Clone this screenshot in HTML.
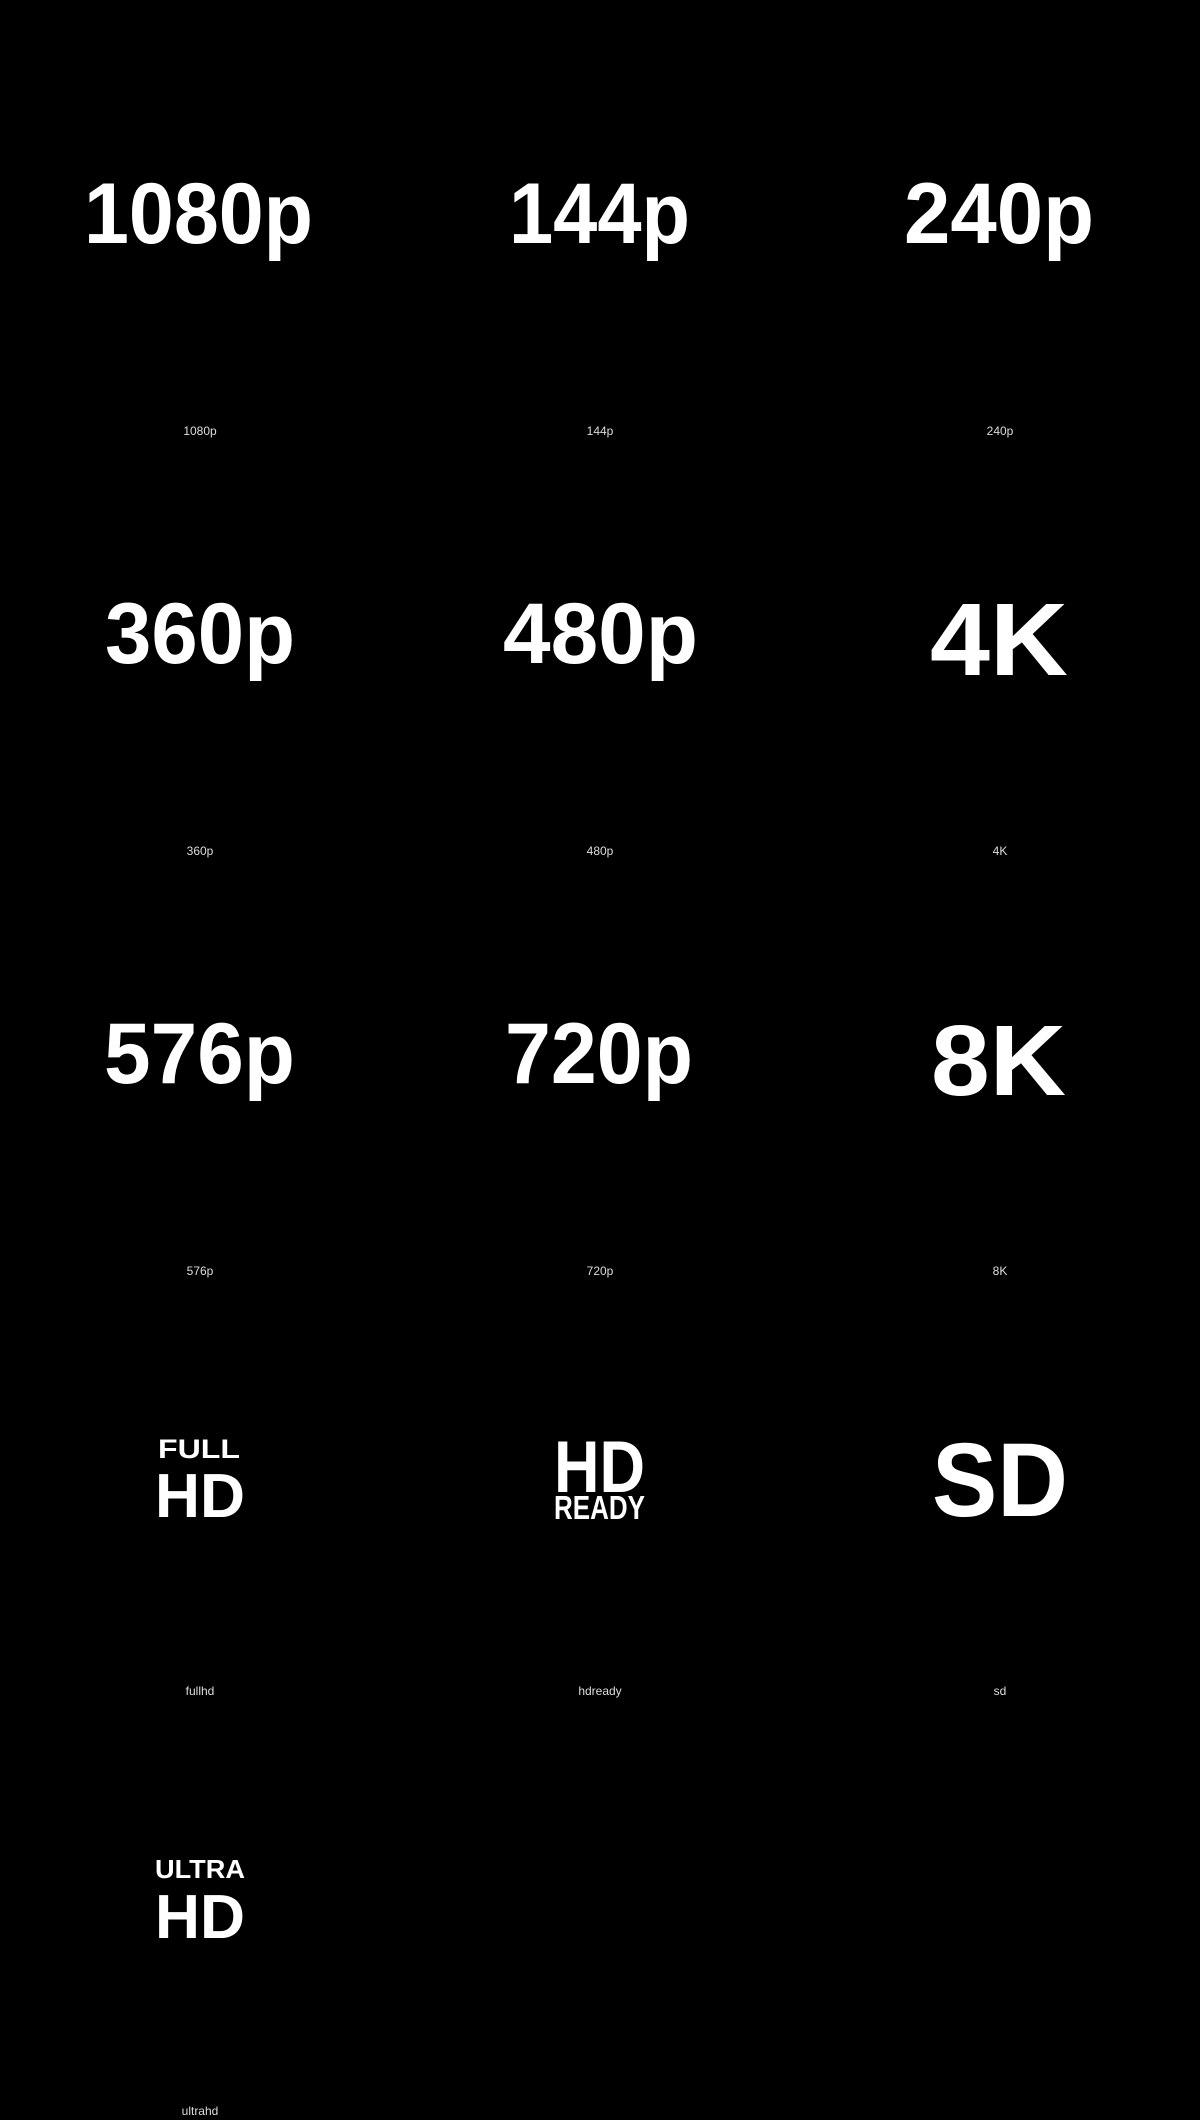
<!DOCTYPE html>
<html><head><meta charset="utf-8"><style>
html,body{margin:0;padding:0;background:#000;}
svg{display:block}
.b{font-family:"Liberation Sans",Arial,sans-serif;font-weight:bold;fill:#fff}
.l{font-family:"Liberation Sans",Arial,sans-serif;font-size:12px;fill:#ddd;text-anchor:middle}
</style></head><body>
<svg width="1200" height="2120" viewBox="0 0 1200 2120" xmlns="http://www.w3.org/2000/svg">
<rect width="1200" height="2120" fill="#000"/>
<!-- Row 1 -->
<text class="b" x="84" y="243" font-size="86" textLength="229" lengthAdjust="spacingAndGlyphs">1080p</text>
<text class="b" x="509" y="243" font-size="86" textLength="181" lengthAdjust="spacingAndGlyphs">144p</text>
<text class="b" x="904" y="243" font-size="86" textLength="190" lengthAdjust="spacingAndGlyphs">240p</text>
<text class="l" x="200" y="435">1080p</text>
<text class="l" x="600" y="435">144p</text>
<text class="l" x="1000" y="435">240p</text>
<!-- Row 2 -->
<text class="b" x="105" y="663" font-size="86" textLength="190" lengthAdjust="spacingAndGlyphs">360p</text>
<text class="b" x="503" y="663" font-size="86" textLength="195" lengthAdjust="spacingAndGlyphs">480p</text>
<text class="b" x="930" y="675" font-size="103" textLength="138" lengthAdjust="spacingAndGlyphs">4K</text>
<text class="l" x="200" y="855">360p</text>
<text class="l" x="600" y="855">480p</text>
<text class="l" x="1000" y="855">4K</text>
<!-- Row 3 -->
<text class="b" x="104" y="1083" font-size="86" textLength="191" lengthAdjust="spacingAndGlyphs">576p</text>
<text class="b" x="505" y="1083" font-size="86" textLength="188" lengthAdjust="spacingAndGlyphs">720p</text>
<text class="b" x="931" y="1095" font-size="100" textLength="135" lengthAdjust="spacingAndGlyphs">8K</text>
<text class="l" x="200" y="1275">576p</text>
<text class="l" x="600" y="1275">720p</text>
<text class="l" x="1000" y="1275">8K</text>
<!-- Row 4 -->
<text class="b" x="158" y="1458" font-size="27" textLength="82" lengthAdjust="spacingAndGlyphs">FULL</text>
<text class="b" x="155" y="1517" font-size="62" textLength="90" lengthAdjust="spacingAndGlyphs">HD</text>
<text class="b" x="554" y="1492" font-size="73" textLength="91" lengthAdjust="spacingAndGlyphs">HD</text>
<text class="b" x="554" y="1519" font-size="33" textLength="91" lengthAdjust="spacingAndGlyphs">READY</text>
<text class="b" x="932" y="1516" font-size="105" textLength="136" lengthAdjust="spacingAndGlyphs">SD</text>
<text class="l" x="200" y="1695">fullhd</text>
<text class="l" x="600" y="1695">hdready</text>
<text class="l" x="1000" y="1695">sd</text>
<!-- Row 5 -->
<text class="b" x="155" y="1878" font-size="26" textLength="90" lengthAdjust="spacingAndGlyphs">ULTRA</text>
<text class="b" x="155" y="1938" font-size="62" textLength="90" lengthAdjust="spacingAndGlyphs">HD</text>
<text class="l" x="200" y="2115">ultrahd</text>
</svg>
</body></html>
